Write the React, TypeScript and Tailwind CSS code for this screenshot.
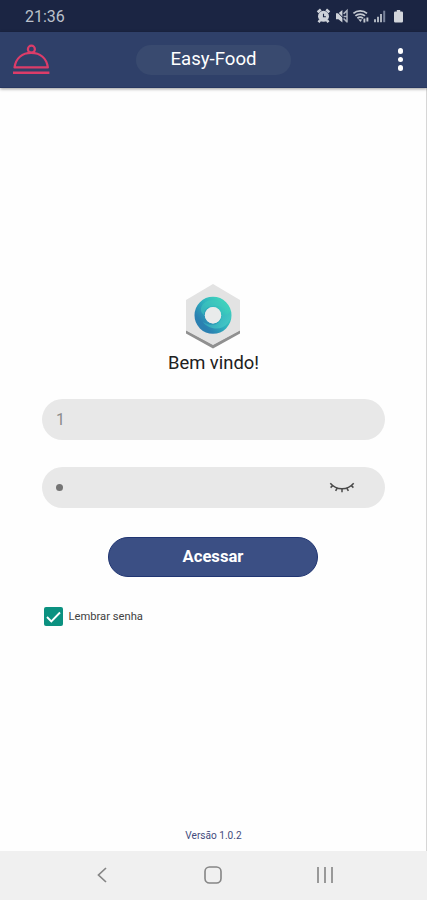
// Login screen of the Easy-Food waiter app

function StatusIcons() {
  return (
    <svg width="90" height="18" viewBox="0 0 90 18" fill="none" aria-hidden="true">
      {/* alarm */}
      <circle cx="7.5" cy="9.3" r="5.5" fill="#ced2d9" />
      <path d="M1.6 5.2 4.8 2.6M13.4 5.2 10.2 2.6M4 13.3 2.6 15.2M11 13.3l1.4 1.9" stroke="#ced2d9" strokeWidth="2.6" />
      <path d="M7.5 6.8v2.9h2.4" stroke="#1b2543" strokeWidth="1.1" />
      {/* muted */}
      <path d="M20 6.2h2.4L26.4 3v12.6l-4-3.4H20z" fill="#ced2d9" />
      <path d="M19.6 3.2 31.5 15.4" stroke="#1b2543" strokeWidth="1" />
      <path d="M27.6 6.9 31 3.6v11.8M27.6 9.5H31M27.6 11.5l3.4 3.4" stroke="#aeb4c0" strokeWidth="1.5" />
      {/* wifi */}
      <path d="M37.4 6.4c3.8-3.3 9.8-3.3 13.6 0M39.4 8.9c2.7-2.3 6.9-2.3 9.6 0M41.4 11.2c1.6-1.3 4-1.3 5.6 0" stroke="#c4c9d1" strokeWidth="1.8" />
      <path d="m42.3 12.3 2.1 2.8 1.8-2.6z" fill="#c4c9d1" />
      <path d="M48.4 11.4v4M51.4 10.6v3.8" stroke="#c4c9d1" strokeWidth="1.9" />
      {/* signal */}
      <path d="M59 12.2v3M62 9.7v5.5M65 7v8.2" stroke="#adb3be" strokeWidth="2" />
      <path d="M68.2 3.7v11.5" stroke="#79839b" strokeWidth="2" />
      {/* battery */}
      <path d="M79.2 4.5h1.6V3h3.4v1.5h1.6q1.2 0 1.2 1.2v8.6q0 1.2-1.2 1.2h-6.6q-1.2 0-1.2-1.2V5.7q0-1.2 1.2-1.2z" fill="#d3d6dc" />
    </svg>
  );
}

function ClocheIcon() {
  return (
    <svg width="38" height="32" viewBox="0 0 38 32" fill="none" stroke="#dc3c69" strokeWidth="2.2" aria-hidden="true">
      <circle cx="19.4" cy="5.2" r="3.5" />
      <path d="M2.5 23.4C4 14 10.5 8.9 19.2 8.9S34.4 14 35.9 23.4z" strokeLinejoin="round" />
      <path d="M1 28.8h36.4" strokeWidth="2.6" />
    </svg>
  );
}

function HexLogo() {
  return (
    <svg className="mr-0.5" width="54" height="65" viewBox="0 0 54 65" aria-hidden="true">
      <defs>
        <linearGradient id="ring" x1="0.9" y1="0.1" x2="0.1" y2="0.8">
          <stop offset="0" stopColor="#3fd0bd" />
          <stop offset="0.5" stopColor="#2eb0bd" />
          <stop offset="1" stopColor="#2b80b1" />
        </linearGradient>
        <linearGradient id="swirl" x1="0" y1="0" x2="1" y2="1">
          <stop offset="0" stopColor="#2a9eb6" />
          <stop offset="1" stopColor="#51d8cd" />
        </linearGradient>
      </defs>
      <path d="M0 46 27 60.5 54 46v3.5L27 64.5 0 49.5z" fill="#909090" />
      <path d="M27 0 54 16v30.5L27 61 0 46.5V16z" fill="#e3e3e3" />
      <circle cx="27" cy="31.3" r="13.3" fill="none" stroke="url(#ring)" strokeWidth="10.4" />
      <path d="M17 20c8-8 23-3 26 9-4-5-10-8-16-7-6 0-9 4-9 9-4-3-4-7-1-11z" fill="#42c9bd" opacity="0.5" />
      <path d="M36 31c0 9-9 13-19 7 5 7 18 10 25 1 3-4 4-8 2-12-1 3-4 5-8 4z" fill="url(#swirl)" opacity="0.65" />
      <circle cx="27" cy="31.3" r="8.2" fill="#e9ebeb" />
    </svg>
  );
}

function ClosedEyeIcon() {
  return (
    <svg width="26" height="12" viewBox="0 0 26 12" fill="none" stroke="#4a4a4a" strokeWidth="1.5" aria-hidden="true">
      <path d="M1.3 1.2C7.5 8.6 18.5 8.6 24.7 1.2" />
      <path d="M3.6 3.6 1.6 5.6M8.3 6 6.6 8.9M13 6.7v3.6M17.7 6l1.7 2.9M22.4 3.6l2 2" />
    </svg>
  );
}

export default function App() {
  return (
    <div className="flex h-[900px] w-[427px] flex-col overflow-hidden bg-[#fefefe] font-['Roboto',sans-serif]">
      <div className="flex h-8 shrink-0 items-center justify-between bg-[#1b2543] pr-[21px] pl-[25px]">
        <span className="pt-0.5 text-base text-[#bcc1cb]">21:36</span>
        <StatusIcons />
      </div>

      <header className="z-10 flex h-14 shrink-0 items-center justify-between border-b border-[#273760] bg-[#2f4069] pr-6 pl-3 shadow-[0_1px_3px_rgba(0,0,0,0.4)]">
        <div className="w-[124px]">
          <ClocheIcon />
        </div>
        <h1 className="flex h-[30px] w-[155px] items-center justify-center rounded-full bg-[#394a6f] text-[18.6px] text-white">
          Easy-Food
        </h1>
        <button className="flex w-[112px] flex-col items-end gap-[3px]" aria-label="Menu">
          <span className="size-[5.5px] rounded-full bg-white" />
          <span className="size-[5.5px] rounded-full bg-white" />
          <span className="size-[5.5px] rounded-full bg-white" />
        </button>
      </header>

      <main className="flex flex-1 flex-col border-r border-[#d6d6d6] pt-[196px] pr-[41px] pl-[42px]">
        <div className="flex flex-col items-center">
          <HexLogo />
          <h2 className="mt-[3px] h-[24px] text-[18.4px] leading-[22px] text-[#202020]">Bem vindo!</h2>
        </div>

        <div className="mt-[23px] flex h-[41px] shrink-0 items-center rounded-full bg-[#e8e8e8] pl-[14px] text-base text-[#8b8b8b]">
          1
        </div>
        <div className="mt-[27px] flex h-[41px] shrink-0 items-center justify-between rounded-full bg-[#e8e8e8] pr-[30px] pl-[14px]">
          <span className="size-[7px] rounded-full bg-[#747474]" />
          <ClosedEyeIcon />
        </div>

        <button className="mt-[29px] mr-px h-10 w-[210px] shrink-0 self-center rounded-full border border-[#203572] bg-[#3b4f84] pt-px text-[16.6px] font-bold text-white">
          Acessar
        </button>

        <label className="mt-[30px] flex items-center gap-[6px] pl-[1.5px] text-[11.2px] text-[#414141]">
          <span className="flex size-[19px] items-center justify-center rounded-[2px] bg-[#0b9180]">
            <svg width="15" height="12" viewBox="0 0 15 12" fill="none" stroke="#fff" strokeWidth="1.9" aria-hidden="true">
              <path d="m1 6 4.3 4.3L14 1.5" />
            </svg>
          </span>
          <span className="pt-px">Lembrar senha</span>
        </label>

        <p className="mt-auto mb-2 text-center text-[10.1px] leading-[14px] text-[#434b7d]">Versão 1.0.2</p>
      </main>

      <nav className="flex h-[49px] shrink-0 items-center justify-between bg-[#f0f0f0] pr-[94px] pb-px pl-[97px]">
        <svg width="10" height="16" viewBox="0 0 10 16" fill="none" stroke="#858585" strokeWidth="1.7" aria-hidden="true">
          <path d="M9 1 1.5 8 9 15" />
        </svg>
        <svg className="ml-0.5" width="18" height="18" viewBox="0 0 18 18" fill="none" stroke="#858585" strokeWidth="1.6" aria-hidden="true">
          <rect x="1" y="1" width="16" height="16" rx="4.5" />
        </svg>
        <svg width="16" height="16" viewBox="0 0 16 16" stroke="#909090" strokeWidth="1.8" aria-hidden="true">
          <path d="M1 0v16M8 0v16M15 0v16" />
        </svg>
      </nav>
    </div>
  );
}
